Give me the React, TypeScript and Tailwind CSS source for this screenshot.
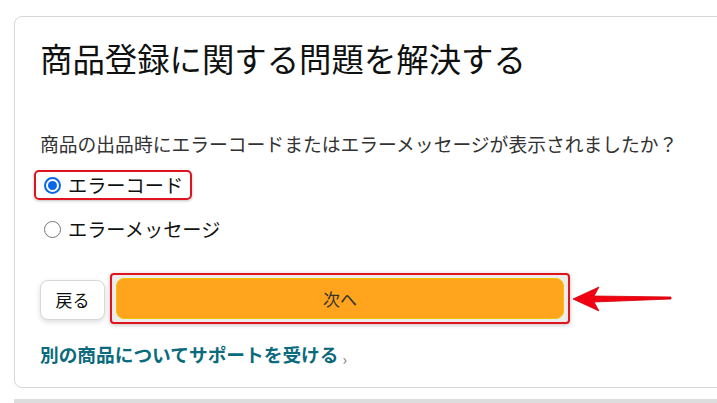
export default function App() {
  return (
    <div
      className="h-[403px] w-[717px] overflow-hidden bg-white pl-[14px] pt-[16px] text-[#0f1111]"
      style={{ fontFamily: '"Noto Sans CJK JP", "Noto Sans", sans-serif' }}
    >
      <div className="h-[372px] w-[730px] rounded-l-lg border border-[#d5d9d9] pl-[25px] pt-[21px]">
        <h1 className="text-[32.4px] leading-[40px] font-normal">商品登録に関する問題を解決する</h1>

        <p className="mt-[54px] text-[18.8px] leading-[24px] text-[#333]">
          商品の出品時にエラーコードまたはエラーメッセージが表示されましたか？
        </p>

        <div className="mt-[14px] flex flex-col gap-[14px]">
          <label className="ml-[-6px] flex h-[30px] w-[158px] items-center gap-[7px] rounded-[5px] border-2 border-[#e0141e] pl-[8px] shadow-[0_1px_3px_rgba(0,0,0,0.25)]">
            <span className="flex h-[17px] w-[17px] items-center justify-center rounded-full border-2 border-[#0a66e8]">
              <span className="h-[9px] w-[9px] rounded-full bg-[#0a66e8]" />
            </span>
            <span className="text-[19.2px] leading-[24px]">エラーコード</span>
          </label>
          <label className="flex h-[30px] items-center gap-[7px] pl-[4px]">
            <span className="h-[17px] w-[17px] rounded-full border border-[#767676]" />
            <span className="text-[19.2px] leading-[24px]">エラーメッセージ</span>
          </label>
        </div>

        <div className="mt-[29px] flex items-center gap-[5px]">
          <button className="mt-[2px] h-[40px] w-[65px] rounded-lg border border-[#d5d9d9] bg-white text-[17px] shadow-[0_2px_5px_rgba(15,17,17,0.15)]">
            戻る
          </button>
          <div className="flex items-center">
            <div className="flex h-[51px] w-[460px] items-center justify-center rounded-[4px] border-2 border-[#e0141e] bg-[#ececec] p-[4px] shadow-[0_1px_4px_rgba(0,0,0,0.25)]">
              <button className="h-[41px] w-full rounded-lg border border-[#f2c200] bg-[#ffa41c] text-[17px] text-[#333]">
                次へ
              </button>
            </div>
            <svg width="102" height="26" viewBox="0 0 102 26" className="ml-[1px]">
              <path
                d="M2 13 L28 1 L23 10 L100 11 L100 13 L23 16 L28 25 Z"
                fill="#f00010"
                stroke="#d0000a"
                strokeWidth="0.8"
                strokeLinejoin="round"
              />
            </svg>
          </div>
        </div>

        <a href="#" className="mt-[18px] flex items-baseline text-[18.7px] font-bold leading-[24px] text-[#0b6a7c]">
          別の商品についてサポートを受ける
          <span className="ml-[4px] translate-y-[3px] text-[15px] font-normal text-[#767676]">›</span>
        </a>
      </div>
      <div className="mt-[11px] h-[10px] w-[720px] bg-[#dddddd]" />
    </div>
  );
}
